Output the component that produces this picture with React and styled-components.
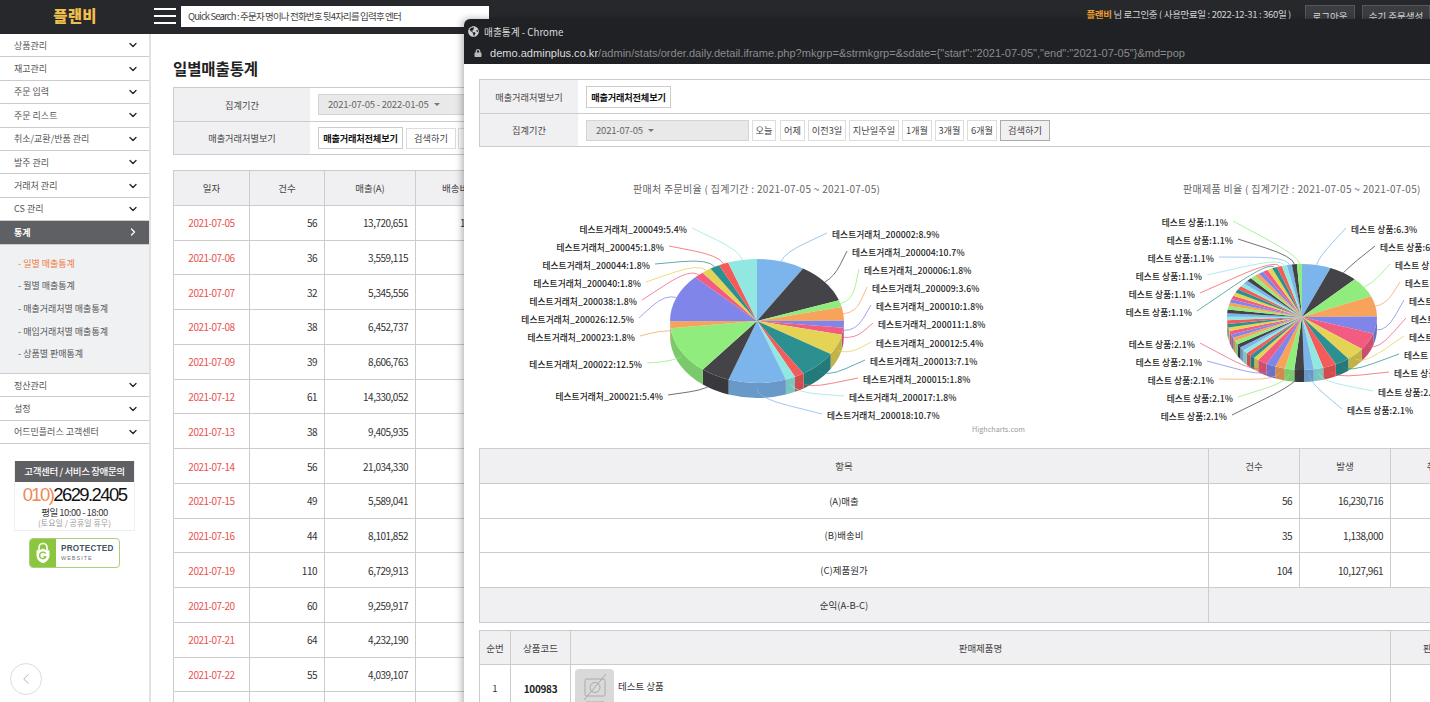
import React from "react";
import styled, { createGlobalStyle } from "styled-components";
import { ChevronDown, ChevronRight, ChevronLeft } from "lucide-react";
import { FaGlobeAmericas, FaLock } from "react-icons/fa";

const KR = `"Noto Sans CJK KR", "Noto Sans", sans-serif`;

const Global = createGlobalStyle`
  html, body { margin: 0; padding: 0; width: 1430px; height: 702px; overflow: hidden; background: #fff; }
  * { box-sizing: border-box; }
  body { font-family: ${KR}; color: #333; }
`;

const Page = styled.div`
  position: relative; width: 1430px; height: 702px; overflow: hidden;
`;
const Header = styled.header`
  height: 34px; background: #26282c; display: flex; align-items: flex-start;
`;
const Logo = styled.div`
  width: 150px; height: 30px; display: flex; align-items: center; justify-content: center;
  color: #f0bf4c; font-size: 15.5px; font-weight: 900; letter-spacing: .2px;
`;
const Burger = styled.div`
  width: 22px; height: 16px; margin: 8px 0 0 4px; display: flex; flex-direction: column; justify-content: space-between;
  span { display: block; height: 2px; background: #fff; }
`;
const Search = styled.div`
  width: 308px; height: 21px; margin: 6px 0 0 5px; background: #fff; padding-left: 7px;
  font-size: 9.5px; line-height: 21px; color: #444; letter-spacing: -.85px; white-space: nowrap;
`;
const UserInfo = styled.div`
  margin: 8px 14px 0 auto; font-size: 9.5px; line-height: 13px; color: #ddd; letter-spacing: -.33px; white-space: nowrap;
  b { color: #f0a030; font-weight: 700; }
`;
const HeadBtn = styled.div`
  width: ${p => p.$w}px; height: 24px; margin: 5px 0 0 ${p => p.$ml}px; background: #3b3d41; border: 1px solid #55575b;
  font-size: 9.5px; line-height: 20px; color: #ddd; text-align: center; white-space: nowrap; flex: none;
`;
const Body = styled.div`
  display: flex; height: 668px;
`;
const Sidebar = styled.aside`
  width: 151px; flex: none; border-right: 2px solid #e2e2e2; display: flex; flex-direction: column; height: 668px;
`;
const MenuRow = styled.div`
  height: 23.4px; flex: none; display: flex; align-items: center; justify-content: space-between;
  padding: 0 10px 0 14px; font-size: 9px; border-bottom: 1px solid #ccc;
  color: ${p => p.$active ? "#fff" : "#555"}; background: ${p => p.$active ? "#5f6064" : "#fff"};
  font-weight: ${p => p.$active ? 700 : 400}; svg { color: ${p => p.$active ? "#fff" : "#222"}; }
`;
const SubMenu = styled.div`
  background: #f0f1f3; padding: 8px 0 7px 18px; flex: none; border-bottom: 1px solid #ccc; height: 129.5px;
`;
const SubItem = styled.div`
  height: 22.7px; line-height: 22.7px; font-size: 9px; color: ${p => p.$on ? "#ee7b3f" : "#555"}; white-space: nowrap;
`;
const Support = styled.div`
  width: 121px; margin: 17px 0 0 14px; border: 1px solid #eee; border-top: none; flex: none; text-align: center; height: 70px;
`;
const SupportHead = styled.div`
  height: 21px; background: #5f6064; color: #fff; font-size: 9.5px; font-weight: 500; line-height: 21px; letter-spacing: -.4px;
`;
const Phone = styled.div`
  font-family: "Liberation Sans", sans-serif; font-size: 18.5px; line-height: 22px; margin-top: 2px; letter-spacing: -1.6px; color: #111;
  span { color: #ee8a55; font-weight: 400; }
`;
const Hours = styled.div`
  font-size: 9.5px; line-height: 12px; color: #333; letter-spacing: -.5px;
`;
const Off = styled.div`
  font-size: 8px; line-height: 10px; color: #999;
`;
const Badge = styled.div`
  width: 91px; height: 30px; margin: 7px 0 0 29px; border: 1px solid #a9d17c; border-radius: 4px; display: flex; overflow: hidden; flex: none; background:#fff;
`;
const BadgeIcon = styled.div`
  width: 26px; background: #8cc540; display: flex; align-items: center; justify-content: center;
`;
const BadgeText = styled.div`
  padding: 6px 0 0 5px; color: #45535e; font-family: "Liberation Sans", sans-serif; line-height: 1;
  b { display: block; font-size: 8.2px; letter-spacing: .25px; }
  span { display: block; font-size: 5.5px; letter-spacing: 1px; margin-top: 2.5px; color: #6a7680; }
`;
const BackBtn = styled.div`
  width: 32px; height: 32px; border-radius: 50%; border: 1px solid #ddd; margin: auto 0 7px 10px; flex: none;
  display: flex; align-items: center; justify-content: center; color: #999;
`;
const Main = styled.main`
  flex: 1; padding-left: 22px; min-width: 0;
`;
const Title = styled.h1`
  margin: 0; padding-top: 24px; height: 53px; font-size: 15.5px; line-height: 20px; font-weight: 700; color: #222; letter-spacing: -.1px;
`;
const Filter = styled.div`
  width: ${p => p.$w}px; border: 1px solid #ccc; ${p => p.$light && "border-width: 1px 0 1px 1px;"}
`;
const FRow = styled.div`
  height: ${p => p.$h}px; display: flex; align-items: center; & + & { border-top: 1px solid #ccc; }
`;
const FLabel = styled.div`
  width: ${p => p.$w}px; height: 100%; background: #f0f0f2; display: flex; align-items: center; justify-content: center;
  font-size: 9.2px; color: #444; flex: none; margin-right: ${p => p.$gap}px;
`;
const SelectBox = styled.div`
  width: ${p => p.$w}px; height: 21px; background: #e9e9e9; border: 1px solid #d4d4d4; font-size: 9.5px; line-height: 19px; color: #666; letter-spacing: -.2px;
  padding-left: ${p => p.$pl}px; flex: none; white-space: nowrap;
  i { display: inline-block; margin-left: 5px; border: 3px solid transparent; border-top: 3px solid #777; border-bottom: none; vertical-align: 2px; }
`;
const Btn = styled.div`
  width: ${p => p.$w}px; height: 21px; margin-left: ${p => p.$ml ?? 3}px; flex: none; border: 1px solid ${p => p.$strong ? "#aaa" : "#ddd"};
  background: ${p => p.$strong ? "#f0f0f0" : "#fff"}; font-size: 9.2px; line-height: 19px; text-align: center; color: #444; white-space: nowrap;
`;
const BoldBtn = styled.div`
  width: 85px; height: 22px; flex: none; border: 1px solid #ccc; background: #fff; font-size: 9.2px; font-weight: 700; line-height: 20px; text-align: center; color: #111; white-space: nowrap; letter-spacing: -.2px;
`;
const Table = styled.table`
  border-collapse: collapse; table-layout: fixed; width: ${p => p.$w}px; margin-top: ${p => p.$mt || 0}px; font-size: 9.5px; color: #333;
  td, th { border: 1px solid #ccc; padding: 0 7px; height: ${p => p.$rh}px; font-weight: 400; white-space: nowrap; }
  th { background: #f0f0f2; color: #444; text-align: center; padding: 0 2px; }
`;
const Num = styled.td`
  text-align: right; font-size: 10px; color: #333; letter-spacing: -.5px;
`;
const DateCell = styled.td`
  text-align: center; color: #e8534f; font-size: 10px; letter-spacing: -.5px;
`;
const Center = styled.td`
  text-align: center; ${p => p.$gray && "background:#f0f0f2;"}
`;
const Bold = styled.td`
  text-align: center; font-weight: 700 !important; color: #222; font-size: 10px; letter-spacing: -.3px;
`;
const ProductCell = styled.td`
  && { padding: 4px; }
`;
const ProductInner = styled.div`
  display: flex; align-items: center; gap: 4px;
`;
const ProductName = styled.span`
  margin-bottom: 4px;
`;
const NoImage = styled.div`
  width: 39px; height: 38px; flex: none; border-radius: 4px; background: #d9d9d9; display: flex; align-items: center; justify-content: center;
`;
const Popup = styled.section`
  position: absolute; left: 464px; top: 19px; width: 1100px; height: 700px; background: #fff; border-radius: 6px 0 0 0; overflow: hidden;
  box-shadow: -2px 0 7px rgba(0,0,0,.3);
`;
const WinBar = styled.div`
  height: 23px; background: #202124; display: flex; align-items: center; gap: 5px; padding: 2px 0 0 4px; color: #ddd; font-size: 9.7px; white-space: nowrap;
`;
const UrlBar = styled.div`
  height: 22px; background: #202124; display: flex; align-items: center; gap: 8px; padding: 0 0 0 10px; font-size: 11.05px; color: #8a8b8e; white-space: nowrap; font-family: "Liberation Sans", sans-serif;
  b { color: #ddd; font-weight: 400; }
`;
const PopBody = styled.div`
  padding: 15px 0 0 15px;
`;
const Charts = styled.div`
  display: flex; height: 283px; margin-top: 18px;
`;
const ChartSvg = styled.svg`
  flex: none; display: block;
  text { font-family: ${KR}; }
`;

const COLORS = ["#7cb5ec","#434348","#90ed7d","#f7a35c","#8085e9","#f15c80","#e4d354","#2b908f","#f45b5b","#91e8e1"];
const dark = hex => {
  const n = parseInt(hex.slice(1), 16);
  const f = .85;
  return `rgb(${((n>>16)&255)*f|0},${((n>>8)&255)*f|0},${(n&255)*f|0})`;
};

function Pie({ box, title, titleX, cx, cy, rx, ry, depth, values, labels, credit }) {
  const total = values.reduce((a, b) => a + b, 0);
  const pt = (t, dy = 0, k = 1) => {
    const a = (t * 360 - 90) * Math.PI / 180;
    return [cx + k * rx * Math.cos(a), cy + k * ry * Math.sin(a) + dy];
  };
  let acc = 0;
  const slices = values.map((v, i) => {
    const t1 = acc / total; acc += v; const t2 = acc / total;
    return { t1, t2, color: COLORS[i % 10], i };
  });
  const arc = (a, b, dy, sweep) => {
    const [x, y] = pt(b, dy);
    return `A${rx} ${ry} 0 ${Math.abs(b - a) > .5 ? 1 : 0} ${sweep} ${x} ${y}`;
  };
  return (
    <ChartSvg width={box[2]} height={box[3]} viewBox={box.join(" ")}>
      <text x={titleX} y={193} fontSize="10" fill="#666" letterSpacing=".3">{title}</text>
      {slices.map(s => {
        const a = Math.max(s.t1, .25), b = Math.min(s.t2, .75);
        if (a >= b) return null;
        const [x1, y1] = pt(a), [x2, y2] = pt(b, depth);
        return <path key={s.i} fill={dark(s.color)} d={`M${x1} ${y1} ${arc(a, b, 0, 1)} L${x2} ${y2} ${arc(b, a, depth, 0)} Z`} />;
      })}
      {slices.map(s => {
        const [x1, y1] = pt(s.t1);
        return <path key={s.i} fill={s.color} d={`M${cx} ${cy} L${x1} ${y1} ${arc(s.t1, s.t2, 0, 1)} Z`} />;
      })}
      {labels.map(l => {
        const s = slices[l.i];
        const m = (s.t1 + s.t2) / 2;
        const front = m > .25 && m < .75;
        const [px, py] = pt(m, front ? depth * .4 : 0);
        const [kx, ky] = pt(m, front ? depth * .4 : 0, 1.14);
        const right = l.anchor === "start";
        const sx = l.x + (right ? -5 : 5), sy = l.y - 4;
        const mx = (sx + kx) / 2;
        return (
          <g key={l.i}>
            <path fill="none" stroke={s.color} strokeOpacity=".75" strokeWidth="1" d={`M${sx} ${sy} L${mx} ${(sy + ky) / 2} Q${kx} ${ky} ${px} ${py}`} />
            <text x={l.x} y={l.y + 1} textAnchor={l.anchor} fontSize="8.7" fontWeight="500" fill="#222" letterSpacing=".1">{l.text}</text>
          </g>
        );
      })}
      {credit && <text x="972" y="432" fontSize="7.2" fill="#999">Highcharts.com</text>}
    </ChartSvg>
  );
}

const leftVals = [8.9,10.7,1.8,3.6,1.8,1.8,5.4,7.1,1.8,1.8,10.7,5.4,12.5,1.8,12.5,1.8,1.8,1.8,1.8,5.4];
const leftLbl = [
  ["200002",832,237],["200004",852,255],["200006",864,273],["200009",872,291],["200010",876,309],["200011",878,327],
  ["200012",876,346],["200013",870,364],["200015",863,382],["200017",849,400],["200018",827,418],
  ["200021",663,399],["200022",642,367],["200023",635,340],["200026",634,322],["200038",637,304],["200040",641,286],
  ["200044",650,268],["200045",664,250],["200049",687,232],
].map((r, i) => ({ i, x: r[1], y: r[2], anchor: i < 11 ? "start" : "end", text: `테스트거래처_${r[0]}:${leftVals[i]}%` }));

const rightVals = [6.3,6.3,6.3,6.3,5.3,5.3,4.2,3.2,2.9,2.1,2.1,...Array(5).fill(2.1),...Array(37).fill(1.1)];
const n = rightVals.length;
const rightLbl = [
  [0,1351,232],[1,1380,250],[2,1395,268],[3,1405,286],[4,1409,304],[5,1411,322],[6,1409,340],[7,1404,358],[8,1394,376],[9,1378,395],[10,1347,413],
  [11,1227,419],[12,1233,401],[13,1214,383],[14,1202,365],[15,1195,347],
  [n-6,1192,315],[n-5,1195,297],[n-4,1202,279],[n-3,1214,261],[n-2,1233,243],[n-1,1228,225],
].map(r => ({ i: r[0], x: r[1], y: r[2], anchor: r[0] < 11 ? "start" : "end",
  text: `테스트 상품:${r[0] < 4 ? "6.3" : r[0] < 6 ? "5.3" : r[0] === 6 ? "4.2" : r[0] < 9 ? "3.2" : r[0] < 16 ? "2.1" : "1.1"}%` }));

const menuTop = ["상품관리","재고관리","주문 입력","주문 리스트","취소/교환/반품 관리","발주 관리","거래처 관리","CS 관리"];
const sub = ["- 일별 매출통계","- 월별 매출통계","- 매출거래처별 매출통계","- 매입거래처별 매출통계","- 상품별 판매통계"];
const menuBottom = ["정산관리","설정","어드민플러스 고객센터"];
const rows = [
  ["2021-07-05",56,"13,720,651","1,138,000"],["2021-07-06",36,"3,559,115","420,000"],["2021-07-07",32,"5,345,556","380,000"],
  ["2021-07-08",38,"6,452,737","450,000"],["2021-07-09",39,"8,606,763","520,000"],["2021-07-12",61,"14,330,052","810,000"],
  ["2021-07-13",38,"9,405,935","560,000"],["2021-07-14",56,"21,034,330","790,000"],["2021-07-15",49,"5,589,041","640,000"],
  ["2021-07-16",44,"8,101,852","590,000"],["2021-07-19",110,"6,729,913","930,000"],["2021-07-20",60,"9,259,917","720,000"],
  ["2021-07-21",64,"4,232,190","770,000"],["2021-07-22",55,"4,039,107","660,000"],["2021-07-23",41,"5,120,400","500,000"],
];
const ranges = [["오늘",24,3],["어제",25,4],["이전3일",38,3],["지난일주일",50,3],["1개월",30,3],["3개월",29,3],["6개월",30,3]];

const Shield = () => (
  <svg width="16" height="22" viewBox="0 0 16 22" fill="none">
    <path d="M4 8V5.5a4 4 0 0 1 8 0V8" stroke="#fff" strokeWidth="1.6" />
    <path d="M8 6.5c2 1.3 4 1.8 6.5 1.8v5c0 4-3 6.6-6.5 8-3.500-1.400-6.500-4-6.500-8v-5c2.500 0 4.500-.5 6.500-1.800z" fill="#fff" />
    <path d="M10.600 11.500a3.300 3.300 0 1 0 .2 3.500H8.300" stroke="#8cc540" strokeWidth="1.400" />
  </svg>
);

export default function App() {
  return (
    <Page>
      <Global />
      <Header>
        <Logo>플랜비</Logo>
        <Burger><span /><span /><span /></Burger>
        <Search>Quick Search : 주문자 명이나 전화번호 뒷4자리를 입력후 엔터</Search>
        <UserInfo><b>플랜비</b> 님 로그인중 ( 사용만료일 : 2022-12-31 : 360일 )</UserInfo>
        <HeadBtn $w={50} $ml={0}>로그아웃</HeadBtn>
        <HeadBtn $w={68} $ml={7}>수기 주문생성</HeadBtn>
      </Header>
      <Body>
        <Sidebar>
          {menuTop.map(m => <MenuRow key={m}>{m}<ChevronDown size={12} strokeWidth={2.6} /></MenuRow>)}
          <MenuRow $active>통계<ChevronRight size={12} strokeWidth={2.6} /></MenuRow>
          <SubMenu>{sub.map((s, i) => <SubItem key={s} $on={i === 0}>{s}</SubItem>)}</SubMenu>
          {menuBottom.map(m => <MenuRow key={m}>{m}<ChevronDown size={12} strokeWidth={2.6} /></MenuRow>)}
          <Support>
            <SupportHead>고객센터 / 서비스 장애문의</SupportHead>
            <Phone><span>010)</span>2629.2405</Phone>
            <Hours>평일 10:00 - 18:00</Hours>
            <Off>(토요일 / 공휴일 휴무)</Off>
          </Support>
          <Badge>
            <BadgeIcon><Shield /></BadgeIcon>
            <BadgeText><b>PROTECTED</b><span>WEBSITE</span></BadgeText>
          </Badge>
          <BackBtn><ChevronLeft size={18} strokeWidth={1} /></BackBtn>
        </Sidebar>
        <Main>
          <Title>일별매출통계</Title>
          <Filter $w={700}>
            <FRow $h={33}>
              <FLabel $w={136} $gap={8}>집계기간</FLabel>
              <SelectBox $w={160} $pl={9}>2021-07-05 - 2022-01-05<i /></SelectBox>
            </FRow>
            <FRow $h={33}>
              <FLabel $w={136} $gap={8}>매출거래처별보기</FLabel>
              <BoldBtn>매출거래처전체보기</BoldBtn>
              <Btn $w={50}>검색하기</Btn>
              <Btn $w={50} $ml={2}>초기화</Btn>
            </FRow>
          </Filter>
          <Table $w={500} $rh={34.77} $mt={15}>
            <colgroup><col width="76" /><col width="75" /><col width="91" /><col width="92" /><col /></colgroup>
            <thead><tr><th>일자</th><th>건수</th><th>매출(A)</th><th>배송비(B)</th><th>제품원가(C)</th></tr></thead>
            <tbody>
              {rows.map(r => (
                <tr key={r[0]}>
                  <DateCell>{r[0]}</DateCell><Num>{r[1]}</Num><Num>{r[2]}</Num><Num>{r[3]}</Num><Num />
                </tr>
              ))}
            </tbody>
          </Table>
        </Main>
      </Body>
      <Popup>
        <WinBar><FaGlobeAmericas size={11} color="#cfcfcf" />매출통계 - Chrome</WinBar>
        <UrlBar><FaLock size={8} color="#bbb" /><span><b>demo.adminplus.co.kr</b>/admin/stats/order.daily.detail.iframe.php?mkgrp=&amp;strmkgrp=&amp;sdate={'{"start":"2021-07-05","end":"2021-07-05"}'}&amp;md=pop</span></UrlBar>
        <PopBody>
          <Filter $w={1085} $light>
            <FRow $h={33}>
              <FLabel $w={98} $gap={8}>매출거래처별보기</FLabel>
              <BoldBtn>매출거래처전체보기</BoldBtn>
            </FRow>
            <FRow $h={33}>
              <FLabel $w={98} $gap={8}>집계기간</FLabel>
              <SelectBox $w={163} $pl={9}>2021-07-05<i /></SelectBox>
              {ranges.map(r => <Btn key={r[0]} $w={r[1]} $ml={r[2]}>{r[0]}</Btn>)}
              <Btn $w={50} $strong>검색하기</Btn>
            </FRow>
          </Filter>
          <Charts>
            <Pie box={[479, 165, 556, 283]} title="판매처 주문비율 ( 집계기간 : 2021-07-05 ~ 2021-07-05)" titleX={633}
              cx={757} cy={321} rx={87} ry={62} depth={15} values={leftVals} labels={leftLbl} credit />
            <Pie box={[1035, 165, 500, 283]} title="판매제품 비율 ( 집계기간 : 2021-07-05 ~ 2021-07-05)" titleX={1183}
              cx={1302} cy={317} rx={75} ry={53} depth={12} values={rightVals} labels={rightLbl} />
          </Charts>
          <Table $w={1001} $rh={34.8}>
            <colgroup><col width="729" /><col width="91" /><col width="91" /><col width="90" /></colgroup>
            <thead><tr><th>항목</th><th>건수</th><th>발생</th><th>취소</th></tr></thead>
            <tbody>
              <tr><Center>(A)매출</Center><Num>56</Num><Num>16,230,716</Num><Num /></tr>
              <tr><Center>(B)배송비</Center><Num>35</Num><Num>1,138,000</Num><Num /></tr>
              <tr><Center>(C)제품원가</Center><Num>104</Num><Num>10,127,961</Num><Num /></tr>
              <tr><Center $gray>순익(A-B-C)</Center><Center $gray colSpan={3} /></tr>
            </tbody>
          </Table>
          <Table $w={1011} $rh={34.5} $mt={7}>
            <colgroup><col width="31" /><col width="60" /><col width="820" /><col width="100" /></colgroup>
            <thead><tr><th>순번</th><th>상품코드</th><th>판매제품명</th><th>판매수량</th></tr></thead>
            <tbody>
              <tr>
                <Center>1</Center>
                <Bold>100983</Bold>
                <ProductCell>
                  <ProductInner>
                    <NoImage>
                      <svg width="30" height="36" viewBox="0 0 30 36" fill="none" stroke="#aaa" strokeWidth="1">
                        <rect x="5" y="9" width="20" height="17" rx="1.500" />
                        <circle cx="15" cy="17.500" r="5" />
                        <path d="M4 30 26 4" />
                        <text x="15" y="34" textAnchor="middle" fontSize="4" fill="#999" stroke="none">No image</text>
                      </svg>
                    </NoImage>
                    <ProductName>테스트 상품</ProductName>
                  </ProductInner>
                </ProductCell>
                <Num />
              </tr>
            </tbody>
          </Table>
        </PopBody>
      </Popup>
    </Page>
  );
}
